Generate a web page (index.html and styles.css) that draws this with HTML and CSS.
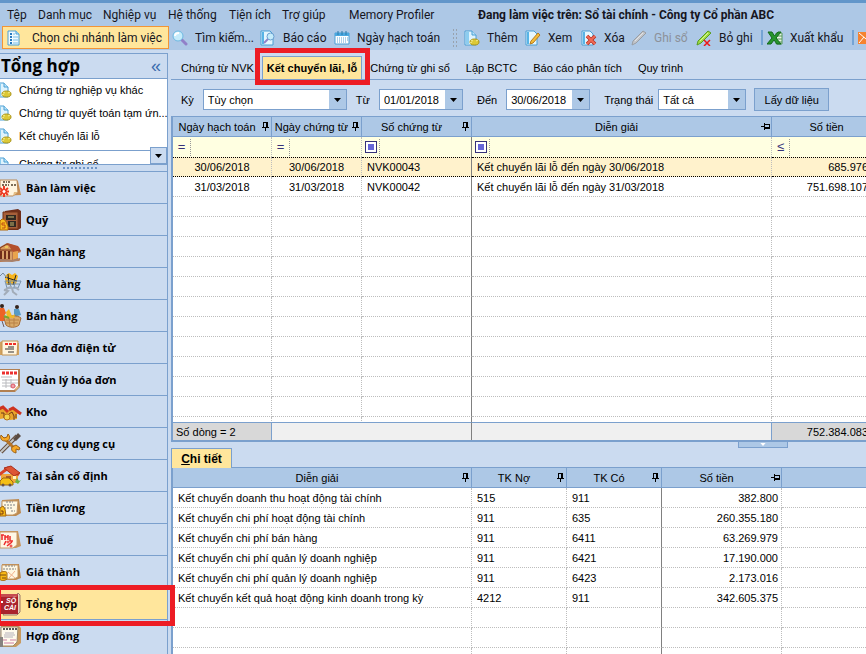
FILE: index.html
```html
<!DOCTYPE html>
<html lang="vi">
<head>
<meta charset="utf-8">
<title>Tổng hợp</title>
<link rel="stylesheet" href="styles.css">
</head>
<body>
<svg class="defs" aria-hidden="true">
  <symbol id="pin" viewBox="0 0 9 9"><path d="M2 0h5v1h-5zM2 1h1v4H2zM5 1h2v4H5zM1 5h7v1H1zM4 6h1v3H4z"/></symbol>
  <symbol id="pin-side" viewBox="0 0 9 9"><path d="M3 1h1v7H3zM4 2h5v1H4zM8 3h1v3H8zM4 5h5v2H4zM0 4h3v1H0z"/></symbol>
  <symbol id="down" viewBox="0 0 7 4"><path d="M0 0h7L3.500 4z"/></symbol>
  <symbol id="page-gear" viewBox="0 0 16 16"><path d="M1 1h7l4 4v10H1z" fill="#dff3fd" stroke="#4a9fd4"/><path d="M2 2h3v12H2z" fill="#8ccdf0"/><path d="M8 1v4h4" fill="#b9e3f8" stroke="#4a9fd4"/><ellipse cx="10.500" cy="12" rx="4.500" ry="3" fill="#dcc936" stroke="#ab9418"/><path d="M7 10l2 1M14 10l-2 1M6 13l2-1" stroke="#f5ec92"/></symbol>
</svg>

<header class="top">
  <nav class="menu">
    <a href="#">Tệp</a><a href="#">Danh mục</a><a href="#">Nghiệp vụ</a><a href="#">Hệ thống</a><a href="#">Tiện ích</a><a href="#">Trợ giúp</a><a href="#">Memory Profiler</a>
    <strong>Đang làm việc trên: Sổ tài chính - Công ty Cổ phần ABC</strong>
  </nav>
  <div class="toolbar">
    <button class="tool branch"><svg viewBox="0 0 16 16"><path d="M2 1h8l3 3v11H2z" fill="#eff9fe" stroke="#4a9fd4"/><path d="M10 1v3h3" fill="#b9e3f8" stroke="#4a9fd4"/><path d="M4 4h2M4 7h2M4 10h2M4 13h2" stroke="#2879c0" stroke-width="2"/><path d="M7 4h2M7 7h5M7 10h5M7 13h5" stroke="#7bbfe8"/></svg>Chọn chi nhánh làm việc</button>
    <button class="tool"><svg viewBox="0 0 16 16"><path d="M10 10l4 4" stroke="#9180c8" stroke-width="3" stroke-linecap="round"/><circle cx="6" cy="6" r="5" fill="#c5ecfb" stroke="#6db9e2"/><path d="M3 6c0-2 2-3 4-3" stroke="#fff" stroke-width="2" fill="none"/></svg>Tìm kiếm...</button>
    <button class="tool"><svg viewBox="0 0 16 16"><path d="M1 1h9l3 3v11H1z" fill="#e5f6fe" stroke="#4a9fd4"/><path d="M2 2h2v12H2z" fill="#58b4e6"/><path d="M8 9l-4 4" stroke="#9180c8" stroke-width="2"/><circle cx="10.500" cy="6.500" r="3.500" fill="#c5ecfb" stroke="#6b9fd0"/></svg>Báo cáo</button>
    <button class="tool"><svg viewBox="0 0 16 16"><path d="M1 3h14v11H1z" fill="#fff" stroke="#4a9fd4"/><path d="M1 3h14v3H1z" fill="#4aa8e0"/><path d="M4 1v4M8 1v4M12 1v4" stroke="#2879a8"/><path d="M3 8h11M3 10h11M3 12h9" stroke="#5ca5d6" stroke-dasharray="1 1"/></svg>Ngày hạch toán</button>
    <i class="grip"></i>
    <button class="tool"><svg><use href="#page-gear"/></svg>Thêm</button>
    <button class="tool"><svg viewBox="0 0 16 16"><path d="M1 1h8l3 3v11H1z" fill="#e5f6fe" stroke="#4a9fd4"/><path d="M2 2h2v12H2z" fill="#58b4e6"/><path d="M13 3l2 2-7 8-3 1 1-3z" fill="#f5bd3a" stroke="#b67c20"/></svg>Xem</button>
    <button class="tool"><svg viewBox="0 0 16 16"><path d="M1 1h8l3 3v11H1z" fill="#e5f6fe" stroke="#4a9fd4"/><path d="M2 2h2v12H2z" fill="#58b4e6"/><path d="M6 6l8 8M14 6l-8 8" stroke="#b52d22" stroke-width="3.500"/><path d="M6 6l8 8M14 6l-8 8" stroke="#f06a55" stroke-width="2"/></svg>Xóa</button>
    <button class="tool" disabled><svg viewBox="0 0 16 16"><path d="M12 1l3 2L5 13l-4 2 1-4z" fill="#c3c6ca" stroke="#999da3"/><path d="M4 11l8-8" stroke="#e2e4e7"/></svg>Ghi sổ</button>
    <button class="tool"><svg viewBox="0 0 16 16"><path d="M12 1l3 2L5 13l-4 2 1-4z" fill="#a2dc45" stroke="#579c20"/><path d="M4 11l8-8" stroke="#d8f79c"/><path d="M8 10l6 6M14 10l-6 6" stroke="#ed1717" stroke-width="1.500"/></svg>Bỏ ghi</button>
    <i class="sep"></i>
    <button class="tool"><svg viewBox="0 0 16 16"><path d="M9 3h6v11H9z" fill="#e8f5e6" stroke="#57985a"/><path d="M9 6h6M9 9h6M9 12h6" stroke="#57985a"/><path d="M1 2h4l2.500 4L11 2h3L9 8l5 6h-4l-3-4-3 4H0l5-6z" fill="#27962d" stroke="#14691c"/></svg>Xuất khẩu</button>
    <i class="sep"></i>
    <button class="tool" aria-label="Thư"><svg viewBox="0 0 16 16"><path d="M0 2h16v12H0z" fill="#f58330"/><path d="M1 3l7 6 7-6M1 13l5-6M15 13l-5-6" fill="none" stroke="#fff"/></svg></button>
  </div>
</header>

<div class="workspace">
<aside class="side">
  <div class="side-head"><h1>Tổng hợp</h1><button aria-label="Thu gọn">«</button></div>
  <div class="shortcuts">
    <a href="#"><svg><use href="#page-gear"/></svg><span>Chứng từ nghiệp vụ khác</span></a>
    <a href="#"><svg><use href="#page-gear"/></svg><span>Chứng từ quyết toán tạm ứn...</span></a>
    <a href="#"><svg><use href="#page-gear"/></svg><span>Kết chuyển lãi lỗ</span></a>
  </div>
  <div class="more">
    <a href="#"><svg><use href="#page-gear"/></svg><span>Chứng từ ghi sổ</span></a>
    <button class="more-btn" aria-label="Xem thêm"><svg><use href="#down"/></svg></button>
  </div>
  <div class="split"></div>
  <nav class="modules">
    <a href="#"><svg viewBox="0 0 22 24"><path d="M0 4l18 1 3 14-21 1z" fill="#c88d50"/><path d="M0 4h17l1 12-5 4H0z" fill="#fff5df" stroke="#b98855"/><path d="M13 20l1-4 4 0" fill="#e4bd83"/><path d="M3 6h4M8 6h3M2 9h7M11 9h5" stroke="#52402b" stroke-width="1.500" stroke-dasharray="2 1"/><path d="M4 10v11M-1 15.500h10M0 12l8 7M8 12l-8 7" stroke="#ed3a22" stroke-width="2"/><circle cx="4" cy="15.500" r="2" fill="#fff" stroke="#ed3a22"/></svg>Bàn làm việc</a>
    <a href="#"><svg viewBox="0 0 22 24"><path d="M5 3l13-2 3 2v17l-3 2H5z" fill="#6e2e1a"/><path d="M3 4h15v17H3z" fill="#a65f3a" stroke="#733219"/><path d="M6 7h10v5H6zM8 13h8v6H8z" fill="#302822"/><path d="M8 9h6M10 15h4M10 17h4" stroke="#c4b66f"/><path d="M0 13l2-2 3 1 3 6v4H0z" fill="#f9bd20" stroke="#b46b0a"/><path d="M5 15H2v2h3v3H2" fill="none" stroke="#c04c12"/></svg>Quỹ</a>
    <a href="#"><svg viewBox="0 0 22 24"><path d="M0 7l7-4 12 4 2 5-3 1v6l2 2-20 1z" fill="#b9774c"/><path d="M0 8l7-4 10 5-6 1H0z" fill="#d99a5a" stroke="#843c1c"/><path d="M7 3l11 3 3 5-8 1z" fill="#b3502d"/><path d="M1 11v8M5 11v8M9 11v8" stroke="#702d19" stroke-width="2"/><path d="M3 11v8M7 11v8M11 12v8" stroke="#f6ca83"/><path d="M13 12l5-1v7l-5 2z" fill="#e9a44d"/><path d="M0 20l12 1 8-2" stroke="#a88069" stroke-width="2" fill="none"/><path d="M5 7h3" stroke="#fff25e"/></svg>Ngân hàng</a>
    <a href="#"><svg viewBox="0 0 22 24"><path d="M6 3l3-2 3 2 3-2 3 3-2 8-9 1-2-6z" fill="#f8b51d"/><path d="M5 5l12 4M8 2l1 11M16 3l-3 10" stroke="#24242a"/><path d="M0 4l3-3 4 5" fill="none" stroke="#778b9c"/><path d="M5 9h16l-3 7H7zM6 12h13M10 9l1 7M15 9l-1 7" fill="none" stroke="#7791a9"/><path d="M12 15c-5 0-5 3-8 3l4 1-4 4M12 16l1 4 4 3M15 15l4 3" fill="none" stroke="#a2acb8" stroke-width="2"/></svg>Mua hàng</a>
    <a href="#"><svg viewBox="0 0 22 24"><circle cx="2" cy="2" r="2" fill="#35231a"/><path d="M-1 4h5l2 5-2 3 1 5H0z" fill="#ed6325"/><circle cx="17" cy="3" r="2" fill="#35231a"/><path d="M14 5h5l2 6-7 2z" fill="#569ac4"/><path d="M4 14c3-3 14-3 17 0l-2 7c-3 3-10 3-13 0z" fill="#d9aa6a" stroke="#a66c36"/><path d="M6 16l13 0M6 19h12M9 14l1 9M14 14v8" stroke="#b88146"/><path d="M6 8l3-3 3 7 3-2-1 4-7-1z" fill="#f3ba23"/><path d="M4 12l5 2" stroke="#77a82d" stroke-width="2"/><path d="M2 17l2 6" stroke="#705d60"/></svg>Bán hàng</a>
    <a href="#"><svg viewBox="0 0 22 24"><path d="M0 6l4-1 2 2h13v12H0z" fill="#d1a25f"/><path d="M2 5h16l-1 14H2z" fill="#fff5df" stroke="#c39350"/><path d="M5 8h11" stroke="#f02e28" stroke-width="2" stroke-dasharray="3 1"/><path d="M8 11h6M5 13h9M8 16h6" stroke="#77726c" stroke-width="1.500"/></svg>Hóa đơn điện tử</a>
    <a href="#"><svg viewBox="0 0 22 24"><path d="M0 1h20v18l-5 5H0z" fill="#b28051"/><path d="M0 2h18v16l-4 4H0z" fill="#fff"/><path d="M2 5h16" stroke="#ec3030" stroke-width="3" stroke-dasharray="3 1"/><path d="M1 9h11M2 12h16M2 15h16M2 18h14M6 11v9M11 11v9" stroke="#b9babe"/><circle cx="13" cy="18" r="2" fill="#f4a1a7" stroke="#dc5967"/><path d="M15 23l1-4 4-1" fill="#e6bd8a"/></svg>Quản lý hóa đơn</a>
    <a href="#"><svg viewBox="0 0 22 24"><path d="M0 9l3-2 5 3 5-2 6 5-2 1v5l-7 1-4-2-6 1z" fill="#e9a42b"/><path d="M-1 9l4-2 5 5M9 10l4-2 8 6" fill="none" stroke="#ce3321" stroke-width="3"/><path d="M1 13h3v5M9 14l3-2 2 4v4M16 14v4" fill="none" stroke="#6e391b"/><circle cx="7" cy="17" r="3" fill="#f4d34d" stroke="#b57019"/></svg>Kho</a>
    <a href="#"><svg viewBox="0 0 22 24"><path d="M1 20L17 4" stroke="#634b3b" stroke-width="4"/><path d="M1 20L17 4" stroke="#c4c7c6" stroke-width="2"/><path d="M4 6l3 3 7 7" stroke="#b7752a" stroke-width="3" fill="none"/><path d="M1 3l3 3 3-1 1-3c4 4 0 8-3 7C1 9 0 6 1 3zM12 15l4-2 4 3-1 2-3-1v4c-4-1-5-3-4-6z" fill="#f7a825" stroke="#99601a"/><path d="M13 7l5-6 3 3-5 5z" fill="#594b43"/></svg>Công cụ dụng cụ</a>
    <a href="#"><svg viewBox="0 0 22 24"><path d="M1 10h17v9H1z" fill="#f1a73c"/><path d="M-1 11L8 4l11 7" fill="none" stroke="#d94328" stroke-width="3"/><path d="M4 4l7-2 9 7-6 3z" fill="#dd5535" stroke="#a92e1e"/><path d="M6 12h5v7H6z" fill="#ac5a2a"/><path d="M13 12h3v3h-3z" fill="#fff5bd"/><path d="M0 17l3-3h6l4 4v3H0z" fill="#f5bf16" stroke="#9b6612"/><circle cx="3" cy="21" r="1.500" fill="#66534b"/><circle cx="10" cy="21" r="1.500" fill="#66534b"/><path d="M15 18l2-4 2 3 2-1-3 4z" fill="#6ab442"/></svg>Tài sản cố định</a>
    <a href="#"><svg viewBox="0 0 22 24"><path d="M2 4l17-1 2 14-5 3H1z" fill="#bd8a50"/><path d="M2 5h16l-1 12-4 2H2z" fill="#fff7e2" stroke="#c49663"/><path d="M6 6h7M4 9h11M4 12h8M11 15h4" stroke="#7e8186" stroke-dasharray="2 1"/><path d="M0 12l3-2 2 3 1 7H0z" fill="#f9b916" stroke="#a46812"/><path d="M1 15h2v3H0" fill="none" stroke="#783a11"/></svg>Tiền lương</a>
    <a href="#"><svg viewBox="0 0 22 24"><path d="M0 3h18l3 15-5 2H0z" fill="#c9945b"/><path d="M0 4h17v13l-4 3H0z" fill="#fff7e6" stroke="#c79a68"/><path d="M1 7h3M2 7v5M5 7v5M8 7v5M5 9h3M10 8v5h3M6 13l-2 4M12 14l-5 4" stroke="#ee2a2a" stroke-width="1.500" fill="none"/><circle cx="8" cy="14" r="1" fill="none" stroke="#ee2a2a"/><circle cx="11" cy="18" r="1" fill="none" stroke="#ee2a2a"/></svg>Thuế</a>
    <a href="#"><svg viewBox="0 0 22 24"><path d="M2 4h17l2 14-5 2H1z" fill="#bd8a50"/><path d="M2 5h16v12l-4 2H2z" fill="#fff7e2" stroke="#c49663"/><path d="M5 6h10M3 9h13" stroke="#7e8186" stroke-dasharray="2 1"/><path d="M8 12l7 6M15 11l-6 7" stroke="#f2b18b"/><path d="M0 13c2-2 7-2 7 0v6c-2 2-7 2-7 0z" fill="#f9b916" stroke="#a46812"/><path d="M0 15h6M2 18h4" stroke="#774812"/></svg>Giá thành</a>
    <a href="#" class="current"><svg viewBox="0 0 22 24"><path d="M18 1l2 2v17l-3 3H3z" fill="#e9d7bf" stroke="#9b7967"/><path d="M0 2h18v20H0z" fill="#aa232c"/><path d="M0 2h18l-1 3H0z" fill="#c54c50"/><text class="book" x="6" y="11">SỔ</text><text class="book" x="4" y="18">CÁI</text><path d="M1 9l2 2M3 9l-2 2" stroke="#fff"/></svg>Tổng hợp</a>
    <a href="#"><svg viewBox="0 0 22 24"><path d="M1 2h18l2 2v15l-5 4H0z" fill="#c89a60"/><path d="M1 3h17l-1 15-4 4H1z" fill="#fffbed" stroke="#9d8b6e"/><path d="M3 5h14" stroke="#555" stroke-width="2" stroke-dasharray="2 1"/><path d="M5 9h9M4 11h11M4 13h9" stroke="#b4b1bb"/><path d="M3 16h4M10 16h6M4 19h10" stroke="#cd7fa3"/><path d="M0 13h3v10H0z" fill="#86837f"/></svg>Hợp đồng</a>
  </nav>
</aside>

<main class="main">
  <nav class="tabs">
    <a href="#">Chứng từ NVK</a><a href="#" class="active">Kết chuyển lãi, lỗ</a><a href="#">Chứng từ ghi sổ</a><a href="#">Lập BCTC</a><a href="#">Báo cáo phân tích</a><a href="#">Quy trình</a>
  </nav>
  <form class="filters">
    <label for="period">Kỳ</label>
    <span class="combo period"><select id="period"><option>Tùy chọn</option></select><i><svg><use href="#down"/></svg></i></span>
    <label for="from">Từ</label>
    <span class="combo date"><input id="from" value="01/01/2018"><i><svg><use href="#down"/></svg></i></span>
    <label for="to">Đến</label>
    <span class="combo date"><input id="to" value="30/06/2018"><i><svg><use href="#down"/></svg></i></span>
    <label for="state">Trạng thái</label>
    <span class="combo state"><select id="state"><option>Tất cả</option></select><i><svg><use href="#down"/></svg></i></span>
    <button type="button" class="fetch">Lấy dữ liệu</button>
  </form>

  <section class="grid-pane">
    <div class="rows"><div class="wide">
      <table class="grid">
        <colgroup><col class="c-posted"><col class="c-doc"><col class="c-no"><col><col class="c-sum"></colgroup>
        <thead>
          <tr><th>Ngày hạch toán<svg><use href="#pin"/></svg></th><th>Ngày chứng từ<svg><use href="#pin"/></svg></th><th>Số chứng từ<svg><use href="#pin"/></svg></th><th>Diễn giải<svg><use href="#pin-side"/></svg></th><th>Số tiền</th></tr>
          <tr class="criteria"><td><span>=</span></td><td><span>=</span></td><td><span><b></b></span></td><td><span><b></b></span></td><td><span>≤</span></td></tr>
        </thead>
        <tbody>
          <tr class="selected"><td class="mid">30/06/2018</td><td class="mid">30/06/2018</td><td>NVK00043</td><td>Kết chuyển lãi lỗ đến ngày 30/06/2018</td><td class="num">685.976</td></tr>
          <tr><td class="mid">31/03/2018</td><td class="mid">31/03/2018</td><td>NVK00042</td><td>Kết chuyển lãi lỗ đến ngày 31/03/2018</td><td class="num">751.698.107</td></tr>
          <tr><td></td><td></td><td></td><td></td><td></td></tr><tr><td></td><td></td><td></td><td></td><td></td></tr>
          <tr><td></td><td></td><td></td><td></td><td></td></tr><tr><td></td><td></td><td></td><td></td><td></td></tr>
          <tr><td></td><td></td><td></td><td></td><td></td></tr><tr><td></td><td></td><td></td><td></td><td></td></tr>
          <tr><td></td><td></td><td></td><td></td><td></td></tr><tr><td></td><td></td><td></td><td></td><td></td></tr>
          <tr><td></td><td></td><td></td><td></td><td></td></tr><tr><td></td><td></td><td></td><td></td><td></td></tr>
          <tr><td></td><td></td><td></td><td></td><td></td></tr><tr><td></td><td></td><td></td><td></td><td></td></tr>
        </tbody>
      </table>
    </div></div>
    <div class="totals"><div class="wide">
      <table class="grid">
        <colgroup><col class="c-posted"><col class="c-doc"><col class="c-no"><col><col class="c-sum"></colgroup>
        <tbody><tr><td class="filled">Số dòng = 2</td><td class="blank" colspan="2"></td><td></td><td class="num filled">752.384.083</td></tr></tbody>
      </table>
    </div></div>
  </section>

  <section class="detail">
    <div class="detail-bar"><button class="detail-tab"><u>C</u>hi tiết</button><button class="handle" aria-label="Thu gọn chi tiết"><svg><use href="#down"/></svg></button></div>
    <table class="grid lines">
      <colgroup><col class="d-text"><col class="d-acc"><col class="d-acc"><col class="d-sum"><col></colgroup>
      <thead><tr><th>Diễn giải<svg><use href="#pin"/></svg></th><th>TK Nợ<svg><use href="#pin"/></svg></th><th>TK Có<svg><use href="#pin"/></svg></th><th>Số tiền<svg><use href="#pin-side"/></svg></th><th></th></tr></thead>
      <tbody>
        <tr><td>Kết chuyển doanh thu hoạt động tài chính</td><td>515</td><td>911</td><td class="num">382.800</td><td></td></tr>
        <tr><td>Kết chuyển chi phí hoạt động tài chính</td><td>911</td><td>635</td><td class="num">260.355.180</td><td></td></tr>
        <tr><td>Kết chuyển chi phí bán hàng</td><td>911</td><td>6411</td><td class="num">63.269.979</td><td></td></tr>
        <tr><td>Kết chuyển chi phí quản lý doanh nghiệp</td><td>911</td><td>6421</td><td class="num">17.190.000</td><td></td></tr>
        <tr><td>Kết chuyển chi phí quản lý doanh nghiệp</td><td>911</td><td>6423</td><td class="num">2.173.016</td><td></td></tr>
        <tr><td>Kết chuyển kết quả hoạt động kinh doanh trong kỳ</td><td>4212</td><td>911</td><td class="num">342.605.375</td><td></td></tr>
        <tr><td></td><td></td><td></td><td></td><td></td></tr>
        <tr><td></td><td></td><td></td><td></td><td></td></tr>
        <tr><td></td><td></td><td></td><td></td><td></td></tr>
      </tbody>
    </table>
  </section>
</main>
</div>
</body>
</html>
```
FILE: styles.css
```css
:root {
  --bar: #adc8e6;
  --pane: #cbdbf0;
  --line: #7ba0cd;
  --dots: #bdbdbd;
  --hot: #ffe69c;
  --mark: #ed1c24;
}
* { box-sizing: border-box; }
body {
  margin: 0;
  height: 100vh;
  overflow: hidden;
  display: flex;
  flex-direction: column;
  background: var(--pane);
  color: #000;
  font: 11px/14px "Liberation Sans", sans-serif;
}
a { color: inherit; text-decoration: none; }
button, input, select { font: inherit; color: inherit; margin: 0; padding: 0; border: 0; background: none; border-radius: 0; }
.defs { position: absolute; width: 0; height: 0; }

/* menu and toolbar */
.top {
  border-top: 3px solid #6296ca;
  background: var(--bar);
  font: 12px/16px Roboto, sans-serif;
  color: #16161e;
  padding-bottom: 1px;
}
.menu {
  display: grid;
  grid-template-columns: 31px 65px 65px 61px 53px 67px 129px 1fr;
  padding: 4px 0 3px 7px;
  white-space: nowrap;
}
.toolbar {
  display: grid;
  grid-template-columns: 170px 88px 74px 118px 12px 61px 56px 50px 65px 65px 6px 85px 6px 16px;
  padding-left: 2px;
  height: 23px;
  overflow: hidden;
}
.tool {
  display: flex;
  align-items: center;
  gap: 7px;
  white-space: nowrap;
  text-align: left;
}
.tool svg { width: 16px; height: 16px; flex: none; }
.tool:disabled { color: #8c9199; }
.branch {
  margin-right: 3px;
  padding-left: 3px;
  gap: 10px;
  background: var(--hot);
  border: 1px solid #f29536;
}
.grip { width: 5px; margin: 2px 0; background: radial-gradient(circle, #98a2ae 1px, transparent 1px) 0 0 / 3px 4px; }
.sep { width: 2px; margin: 4px 0; background: #75a4d4; }

/* sidebar */
.workspace { flex: 1; min-height: 0; display: flex; gap: 3px; }
.side {
  width: 168px;
  flex: none;
  display: flex;
  flex-direction: column;
  margin-top: 3px;
  border-top: 1px solid var(--line);
  border-right: 1px solid var(--line);
}
.side-head {
  display: flex;
  justify-content: space-between;
  align-items: center;
  height: 25px;
  flex: none;
  padding: 0 6px 0 1px;
  border-bottom: 1px solid var(--line);
}
.side-head h1 { margin: 0; font: bold 17px/24px "Open Sans", sans-serif; }
.side-head button { font-size: 18px; color: #3b6dae; }
.shortcuts { background: #fff; height: 72px; flex: none; border-bottom: 1px solid var(--line); }
.shortcuts a, .more a {
  display: flex;
  align-items: center;
  gap: 7px;
  height: 23px;
  padding-bottom: 2px;
}
.shortcuts svg, .more a svg { width: 16px; height: 16px; flex: none; margin-left: -4px; }
.shortcuts span { white-space: nowrap; }
.more { position: relative; height: 14px; flex: none; background: #fff; padding-top: 2px; border-bottom: 1px solid var(--line); }
.more a { height: 11px; overflow: hidden; align-items: flex-start; padding-top: 4px; padding-bottom: 0; }
.more-btn {
  position: absolute;
  right: 0;
  bottom: 0;
  width: 17px;
  height: 17px;
  background: var(--pane);
  border: 1px solid var(--line);
  display: grid;
  place-items: center;
}
.more-btn svg { width: 7px; height: 4px; }
.split { height: 6px; flex: none; background: repeating-linear-gradient(90deg, #6f96c8 0 2px, transparent 2px 4px) 63px 2px / 36px 2px no-repeat; }
.modules { flex: none; font: bold 11px/16px "Open Sans", sans-serif; }
.modules a {
  display: flex;
  align-items: center;
  gap: 4px;
  height: 32px;
  position: relative;
  border-top: 1px solid var(--line);
}
.modules svg { width: 22px; height: 24px; }
.modules .current { background: var(--hot); }
.modules .current::after {
  content: "";
  position: absolute;
  z-index: 2;
  inset: -3px -8px -7px -4px;
  border: 5px solid var(--mark);
}
.book { font: italic bold 7px "Liberation Sans", sans-serif; fill: #fff; }

/* main area */
.main { flex: 1; min-width: 0; display: flex; flex-direction: column; }
.tabs {
  display: flex;
  align-items: flex-end;
  flex: none;
  height: 30px;
  padding-left: 2px;
  border-bottom: 1px solid var(--line);
  white-space: nowrap;
}
.tabs a { padding: 5px 8px 4px; height: 23px; }
.tabs .active {
  position: relative;
  z-index: 2;
  padding: 4px;
  font-weight: bold;
  background: var(--hot);
  border: 1px solid var(--line);
  border-bottom: 0;
}
.tabs .active::after {
  content: "";
  position: absolute;
  inset: -9px -9px -6px -8px;
  border: 5px solid var(--mark);
}
.filters {
  display: flex;
  align-items: center;
  flex: none;
  height: 36px;
  padding: 3px 0 0 10px;
  white-space: nowrap;
}
.combo {
  display: flex;
  height: 21px;
  margin: 0 9px;
  border: 1px solid var(--line);
  background: #fff;
}
.combo select, .combo input { appearance: none; flex: 1; min-width: 0; padding-left: 4px; outline: 0; }
.combo i { width: 17px; background: var(--bar); display: grid; place-items: center; pointer-events: none; }
.combo svg { width: 7px; height: 4px; }
.period { width: 144px; }
.date { width: 84px; margin-right: 14px; }
.state { width: 88px; margin: 0 8px 0 5px; }
.fetch { width: 75px; height: 23px; background: var(--bar); border: 1px solid var(--line); }

/* grids */
.grid-pane {
  flex: 1;
  min-height: 0;
  display: flex;
  flex-direction: column;
  background: #fff;
  border: 1px solid var(--line);
  border-width: 1px 0 2px 2px;
}
.rows { flex: 1; min-height: 0; overflow: hidden; }
.totals { flex: none; overflow: hidden; }
.wide { margin-right: -26px; }
.grid { width: 100%; table-layout: fixed; border-spacing: 0; white-space: nowrap; }
.grid th, .grid td { height: 20px; padding: 0 5px; border-bottom: 1px dotted var(--dots); border-right: 1px dotted var(--dots); text-align: left; }
.grid th {
  position: relative;
  padding: 0 12px 0 2px;
  font-weight: normal;
  text-align: center;
  background: var(--bar);
  border-bottom: 1px solid var(--line);
  border-right: 1px solid var(--line);
}
.grid th svg { position: absolute; right: 1px; top: 5px; width: 9px; height: 9px; }
.grid .mid { text-align: center; }
.grid .num { text-align: right; padding-right: 23px; }
.rows td:nth-child(3) { border-right: 1px solid #808080; }
.criteria td { background: #ffffe1; padding: 0; border-bottom: 0; }
.criteria span { display: grid; place-items: center; width: 18px; height: 17px; border-right: 1px dotted #999; color: #35317a; font-size: 13px; }
.criteria b { width: 12px; height: 12px; border: 1px solid #35317a; background: #6666d8; box-shadow: inset 0 0 0 2px #fff; }
.selected td { background: #fff2cc; border-top: 1px dotted #000; border-bottom: 1px dotted #000; }
.c-posted { width: 99px; }
.c-doc { width: 90px; }
.c-no { width: 110px; }
.c-sum { width: 120px; }
.totals .grid td { height: 18px; background: #f0f0f0; border-top: 1px solid var(--line); border-bottom: 0; border-right: 1px solid var(--line); padding-left: 3px; }
.totals .grid .filled { background: #d8d8d8; }
.totals .grid .blank { border-right-color: #808080; }

/* detail pane */
.detail { height: 212px; flex: none; overflow: hidden; }
.detail-bar { position: relative; height: 26px; padding-top: 6px; border-bottom: 1px solid var(--line); }
.detail-tab {
  display: block;
  height: 20px;
  width: 61px;
  position: relative;
  font-weight: bold;
  font-size: 12px;
  background: var(--hot);
  border: 1px solid var(--line);
  border-bottom: 0;
}
.handle {
  position: absolute;
  top: 0;
  right: 78px;
  width: 50px;
  height: 6px;
  background: var(--bar);
  border: 1px solid var(--line);
  border-top: 0;
  display: grid;
  place-items: center;
}
.handle svg { width: 6px; height: 3px; fill: #fff; }
.lines { background: #fff; border-left: 2px solid var(--line); }
.lines .num { padding-right: 3px; }
.lines td:nth-child(3) { border-right: 1px solid #808080; }
.lines th:last-child, .lines td:last-child { border-right: 0; }
.d-text { width: 299px; }
.d-acc { width: 95px; }
.d-sum { width: 120px; }
```
